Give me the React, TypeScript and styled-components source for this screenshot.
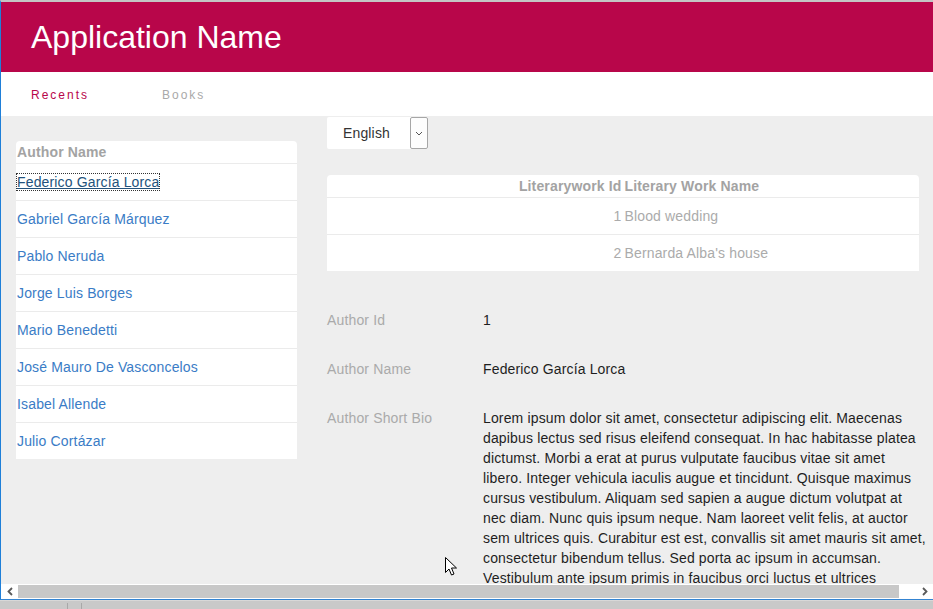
import React from "react";
import styled, { createGlobalStyle } from "styled-components";

const GlobalStyle = createGlobalStyle`
  html, body { margin: 0; padding: 0; background: #eeeeee; }
  body { font-family: "Liberation Sans", Arial, sans-serif; }
  * { box-sizing: border-box; }
`;

const Screen = styled.div`
  position: relative;
  width: 933px;
  height: 609px;
  overflow: hidden;
  display: flex;
  flex-direction: column;
  background: #c9c9c9;
`;

const Window = styled.div`
  height: 600px;
  display: flex;
  flex-direction: column;
  border-top: 2px solid #c4c4c4;
  border-left: 1px solid #1f7fd8;
  border-bottom: 1px solid #3484d2;
  background: #eeeeee;
`;

const Header = styled.header`
  height: 70px;
  flex: none;
  background: #b8064a;
  display: flex;
  align-items: center;
  padding-left: 30px;
`;

const Title = styled.h1`
  margin: 0;
  color: #ffffff;
  font-size: 32px;
  font-weight: 400;
  line-height: 1;
`;

const Nav = styled.nav`
  height: 44px;
  flex: none;
  background: #ffffff;
  display: flex;
  align-items: center;
  padding: 2px 0 0 30px;
`;

const Tab = styled.span<{ $active?: boolean }>`
  width: 131px;
  font-size: 12px;
  letter-spacing: 2px;
  color: ${(p) => (p.$active ? "#b8064a" : "#a9a9a9")};
`;

const Content = styled.main`
  flex: 1;
  min-height: 0;
  overflow: hidden;
  display: grid;
  grid-template-columns: 281px 1fr;
  column-gap: 30px;
  align-items: start;
  padding: 0 14px 0 15px;
  letter-spacing: 0.15px;
`;

const LeftColumn = styled.div`
  padding-top: 25px;
`;

const Card = styled.div`
  background: #ffffff;
  border-radius: 4px 4px 0 0;
`;

const HeadRow = styled.div`
  height: 22px;
  display: flex;
  align-items: center;
  padding-left: 1px;
  font-size: 14px;
  font-weight: 700;
  color: #a3a3a3;
`;

const ListRow = styled.div`
  height: 37px;
  border-top: 1px solid #ebebeb;
  display: flex;
  align-items: center;
  padding-left: 1px;
`;

const AuthorLink = styled.a<{ $focused?: boolean }>`
  font-size: 14px;
  color: ${(p) => (p.$focused ? "#23527c" : "#3a7cc6")};
  text-decoration: ${(p) => (p.$focused ? "underline" : "none")};
  outline: ${(p) => (p.$focused ? "1px dotted #333" : "none")};
  cursor: pointer;
`;

const RightColumn = styled.div`
  padding-top: 1px;
  min-width: 0;
`;

const SelectBox = styled.div`
  width: 101px;
  height: 32px;
  background: #ffffff;
  display: flex;
  align-items: stretch;
  border-radius: 2px;
`;

const SelectText = styled.span`
  flex: 1;
  display: flex;
  align-items: center;
  padding-left: 16px;
  font-size: 14px;
  color: #333333;
`;

const SelectArrow = styled.span`
  width: 18px;
  border: 1px solid #a6a6a6;
  border-radius: 2px;
  background: #fdfdfd;
  display: flex;
  align-items: center;
  justify-content: center;
`;

const Table = styled.div`
  margin-top: 26px;
  background: #ffffff;
  border-radius: 4px 4px 0 0;
`;

const TableRow = styled.div<{ $head?: boolean }>`
  display: grid;
  grid-template-columns: 1fr 1fr;
  column-gap: 3px;
  align-items: center;
  height: ${(p) => (p.$head ? "22px" : "37px")};
  border-top: ${(p) => (p.$head ? "none" : "1px solid #ebebeb")};
  font-size: 14px;
  font-weight: ${(p) => (p.$head ? 700 : 400)};
  color: ${(p) => (p.$head ? "#a3a3a3" : "#ababab")};
`;

const CellRight = styled.span`
  text-align: right;
`;

const CellLeft = styled.span`
  text-align: left;
`;

const Details = styled.dl`
  margin: 39px 0 0;
  display: grid;
  grid-template-columns: 156px 450px;
  row-gap: 29px;
  font-size: 14px;
  line-height: 20px;
`;

const Label = styled.dt`
  color: #aaaaaa;
`;

const Value = styled.dd`
  margin: 0;
  color: #1e1e1e;
`;

const BioLine = styled.span`
  display: block;
  white-space: nowrap;
`;

const Scrollbar = styled.div`
  height: 15px;
  flex: none;
  background: #ffffff;
  display: flex;
  align-items: stretch;
`;

const ScrollButton = styled.span<{ $w: number }>`
  width: ${(p) => p.$w}px;
  flex: none;
  display: flex;
  align-items: center;
  justify-content: center;
`;

const Thumb = styled.span`
  flex: 1;
  margin: 1px 18px 1px 0;
  background: #c8c8c8;
`;

const BottomStrip = styled.div`
  flex: 1;
  background: #c9c9c9;
  border-top: 1px solid #d8d8d8;
  display: flex;
  padding-left: 67px;
  gap: 13px;
`;

const Divider = styled.span`
  width: 1px;
  margin-top: 2px;
  background: #a8a8a8;
`;

const Pointer = styled.svg`
  position: absolute;
  left: 445px;
  top: 557px;
`;

const authors = [
  "Federico García Lorca",
  "Gabriel García Márquez",
  "Pablo Neruda",
  "Jorge Luis Borges",
  "Mario Benedetti",
  "José Mauro De Vasconcelos",
  "Isabel Allende",
  "Julio Cortázar",
];

const works = [
  { id: 1, name: "Blood wedding" },
  { id: 2, name: "Bernarda Alba's house" },
];

const bioLines = [
  "Lorem ipsum dolor sit amet, consectetur adipiscing elit. Maecenas",
  "dapibus lectus sed risus eleifend consequat. In hac habitasse platea",
  "dictumst. Morbi a erat at purus vulputate faucibus vitae sit amet",
  "libero. Integer vehicula iaculis augue et tincidunt. Quisque maximus",
  "cursus vestibulum. Aliquam sed sapien a augue dictum volutpat at",
  "nec diam. Nunc quis ipsum neque. Nam laoreet velit felis, at auctor",
  "sem ultrices quis. Curabitur est est, convallis sit amet mauris sit amet,",
  "consectetur bibendum tellus. Sed porta ac ipsum in accumsan.",
  "Vestibulum ante ipsum primis in faucibus orci luctus et ultrices",
];

export default function App() {
  return (
    <>
      <GlobalStyle />
      <Screen>
        <Window>
          <Header>
            <Title>Application Name</Title>
          </Header>
          <Nav>
            <Tab $active>Recents</Tab>
            <Tab>Books</Tab>
          </Nav>
          <Content>
            <LeftColumn>
              <Card>
                <HeadRow>Author Name</HeadRow>
                {authors.map((a, i) => (
                  <ListRow key={a}>
                    <AuthorLink $focused={i === 0}>{a}</AuthorLink>
                  </ListRow>
                ))}
              </Card>
            </LeftColumn>
            <RightColumn>
              <SelectBox>
                <SelectText>English</SelectText>
                <SelectArrow>
                  <svg width="8" height="5" viewBox="0 0 8 5">
                    <path d="M1 1 L4 4 L7 1" fill="none" stroke="#555" strokeWidth="1" />
                  </svg>
                </SelectArrow>
              </SelectBox>
              <Table>
                <TableRow $head>
                  <CellRight>Literarywork Id</CellRight>
                  <CellLeft>Literary Work Name</CellLeft>
                </TableRow>
                {works.map((w) => (
                  <TableRow key={w.id}>
                    <CellRight>{w.id}</CellRight>
                    <CellLeft>{w.name}</CellLeft>
                  </TableRow>
                ))}
              </Table>
              <Details>
                <Label>Author Id</Label>
                <Value>1</Value>
                <Label>Author Name</Label>
                <Value>Federico García Lorca</Value>
                <Label>Author Short Bio</Label>
                <Value>
                  {bioLines.map((l) => (
                    <BioLine key={l}>{l}</BioLine>
                  ))}
                </Value>
              </Details>
            </RightColumn>
          </Content>
          <Scrollbar>
            <ScrollButton $w={17}>
              <svg width="6" height="9" viewBox="0 0 6 9">
                <path d="M5 1 L1.5 4.5 L5 8" fill="none" stroke="#5a5a5a" strokeWidth="1.8" />
              </svg>
            </ScrollButton>
            <Thumb />
            <ScrollButton $w={16}>
              <svg width="6" height="9" viewBox="0 0 6 9">
                <path d="M1 1 L4.5 4.5 L1 8" fill="none" stroke="#5a5a5a" strokeWidth="1.8" />
              </svg>
            </ScrollButton>
          </Scrollbar>
        </Window>
        <BottomStrip>
          <Divider />
          <Divider />
        </BottomStrip>
        <Pointer width="13" height="20" viewBox="0 0 13 20">
          <path
            d="M0.5 0.5 L0.5 15.5 L4 12 L6.5 18 L9 17 L6.5 11 L11.5 11 Z"
            fill="#ffffff"
            stroke="#000000"
            strokeWidth="1"
            strokeLinejoin="round"
          />
        </Pointer>
      </Screen>
    </>
  );
}
